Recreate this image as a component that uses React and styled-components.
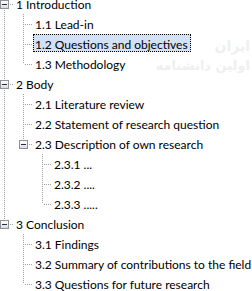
import React from "react";
import styled, { createGlobalStyle, css } from "styled-components";

const Global = createGlobalStyle`
  html, body { margin: 0; padding: 0; background: #ffffff; }
  body { width: 252px; height: 291px; overflow: hidden; }
`;

const Page = styled.div`
  position: relative;
  width: 252px;
  height: 291px;
  overflow: hidden;
  background: #ffffff;
  font-family: Lato, "Noto Sans", sans-serif;
  font-size: 12px;
  color: #000000;
`;

const Watermark = styled.div`
  position: absolute;
  right: ${(p) => p.$right}px;
  top: ${(p) => p.$top}px;
  direction: rtl;
  font-family: "DejaVu Sans", sans-serif;
  font-size: ${(p) => p.$size}px;
  font-weight: bold;
  color: #efefef;
  white-space: nowrap;
  pointer-events: none;
`;

const Tree = styled.div`
  position: relative;
  display: flex;
  flex-direction: column;
  margin: -6px 0 0 -5px;
`;

const Row = styled.div`
  display: flex;
  align-items: flex-start;
  height: 20px;
`;

const dots = css`
  background-image: linear-gradient(to bottom, #a0a0a0 50%, transparent 50%);
  background-size: 1px 2px;
`;

const Guide = styled.div`
  position: relative;
  flex: 0 0 19px;
  height: 20px;
  ${(p) =>
    p.$line &&
    css`
      &::before {
        content: "";
        position: absolute;
        left: 9px;
        top: 0;
        width: 1px;
        height: 20px;
        ${dots}
      }
    `}
`;

const Connector = styled.div`
  position: relative;
  flex: 0 0 19px;
  height: 20px;
  &::before {
    content: "";
    position: absolute;
    left: 9px;
    top: ${(p) => (p.$top ? 0 : 10)}px;
    height: ${(p) => (p.$top ? 10 : 0) + (p.$bottom ? 10 : 0)}px;
    width: 1px;
    ${dots}
  }
  &::after {
    content: "";
    position: absolute;
    left: 10px;
    top: 10px;
    width: 9px;
    height: 1px;
    background-image: linear-gradient(to right, transparent 50%, #a0a0a0 50%);
    background-size: 2px 1px;
  }
`;

const Expander = styled.span`
  position: absolute;
  z-index: 1;
  left: 5px;
  top: 6px;
  width: 9px;
  height: 9px;
  box-sizing: border-box;
  border: 1px solid #919191;
  background: linear-gradient(to bottom, #ffffff 0%, #f0f0f0 50%, #d8d8d8 100%);
  &::after {
    content: "";
    position: absolute;
    left: 1px;
    top: 3px;
    width: 5px;
    height: 1px;
    background: #1c2f4d;
  }
`;

const Label = styled.span`
  height: 18px;
  box-sizing: border-box;
  padding: 5px 2px 0 1px;
  border: 1px solid transparent;
  line-height: 10px;
  white-space: nowrap;
  ${(p) =>
    p.$selected &&
    css`
      background: #d3e1f6;
      border: 1px dotted #000000;
    `}
`;

const data = [
  {
    label: "1 Introduction",
    children: [
      { label: "1.1 Lead-in" },
      { label: "1.2 Questions and objectives", selected: true },
      { label: "1.3 Methodology" },
    ],
  },
  {
    label: "2 Body",
    children: [
      { label: "2.1 Literature review" },
      { label: "2.2 Statement of research question" },
      {
        label: "2.3 Description of own research",
        children: [
          { label: "2.3.1 ..." },
          { label: "2.3.2 ...." },
          { label: "2.3.3 ....." },
        ],
      },
    ],
  },
  {
    label: "3 Conclusion",
    children: [
      { label: "3.1 Findings" },
      { label: "3.2 Summary of contributions to the field" },
      { label: "3.3 Questions for future research" },
    ],
  },
];

function flatten(nodes, guides = [], depth = 0, out = []) {
  nodes.forEach((node, i) => {
    const isLast = i === nodes.length - 1;
    const isFirstRoot = depth === 0 && i === 0;
    out.push({ node, guides, isLast, isFirstRoot });
    if (node.children) flatten(node.children, [...guides, !isLast], depth + 1, out);
  });
  return out;
}

const rows = flatten(data);

export default function App() {
  return (
    <Page>
      <Global />
      <Watermark $right={2} $top={38} $size={14}>ایران</Watermark>
      <Watermark $right={2} $top={58} $size={13}>اولین دانشنامه</Watermark>
      <Tree>
        {rows.map(({ node, guides, isLast, isFirstRoot }, idx) => (
          <Row key={idx}>
            {guides.map((g, gi) => (
              <Guide key={gi} $line={g} />
            ))}
            <Connector $top={!isFirstRoot} $bottom={!isLast}>
              {node.children && <Expander />}
            </Connector>
            <Label $selected={node.selected}>{node.label}</Label>
          </Row>
        ))}
      </Tree>
    </Page>
  );
}
